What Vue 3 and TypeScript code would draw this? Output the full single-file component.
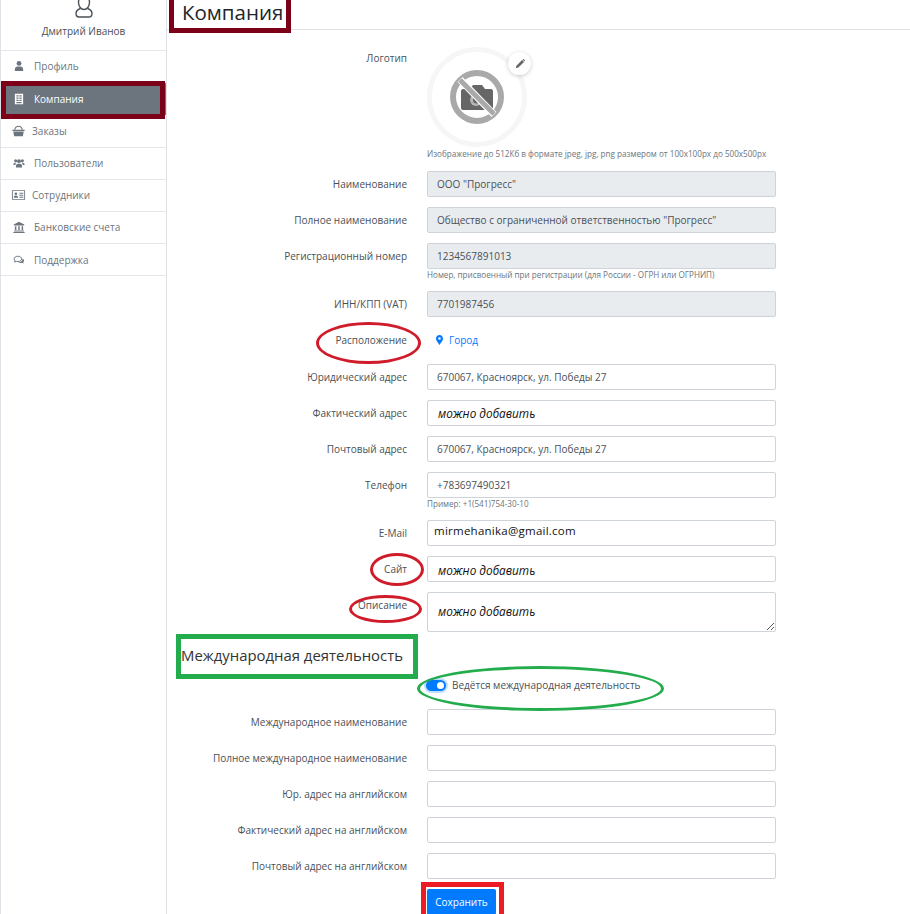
<script setup lang="ts">
interface NavItem { label: string; icon: string; active?: boolean; tight?: boolean }
interface Field { label: string; value?: string; disabled?: boolean; hint?: string; kind?: string }

const nav: NavItem[] = [
  { label: 'Профиль', icon: 'user' },
  { label: 'Компания', icon: 'building', active: true },
  { label: 'Заказы', icon: 'basket', tight: true },
  { label: 'Пользователи', icon: 'users' },
  { label: 'Сотрудники', icon: 'card', tight: true },
  { label: 'Банковские счета', icon: 'bank' },
  { label: 'Поддержка', icon: 'chat' },
]

const topFields: Field[] = [
  { label: 'Наименование', value: 'ООО "Прогресс"', disabled: true },
  { label: 'Полное наименование', value: 'Общество с ограниченной ответственностью "Прогресс"', disabled: true },
  { label: 'Регистрационный номер', value: '1234567891013', disabled: true, hint: 'Номер, присвоенный при регистрации (для России - ОГРН или ОГРНИП)' },
  { label: 'ИНН/КПП (VAT)', value: '7701987456', disabled: true },
]
const midFields: Field[] = [
  { label: 'Юридический адрес', value: '670067, Красноярск, ул. Победы 27' },
  { label: 'Фактический адрес', value: 'можно добавить', kind: 'note' },
  { label: 'Почтовый адрес', value: '670067, Красноярск, ул. Победы 27' },
  { label: 'Телефон', value: '+783697490321', hint: 'Пример: +1(541)754-30-10' },
  { label: 'E-Mail', value: 'mirmehanika@gmail.com', kind: 'mail' },
  { label: 'Сайт', value: 'можно добавить', kind: 'note low' },
]
const intlFields: string[] = [
  'Международное наименование',
  'Полное международное наименование',
  'Юр. адрес на английском',
  'Фактический адрес на английском',
  'Почтовый адрес на английском',
]
</script>

<template>
  <div class="page">
    <aside class="side">
      <div class="who">
        <svg class="avatar" viewBox="0 0 24 22" width="24" height="22" fill="none" stroke="#495057" stroke-width="1.4">
          <path d="M12 -4c-3.200 0-5.500 2.500-5.500 6.500S9 9.500 12 9.500s5.500-3 5.500-7S15.200 -4 12 -4z" />
          <path d="M8.500 8.500C5.500 9.500 4 11 4 13.500c0 2.300 1.200 3.500 3.200 3.500h9.600c2 0 3.200-1.200 3.200-3.500 0-2.500-1.500-4-4.500-5" />
        </svg>
        <div class="who-name">Дмитрий Иванов</div>
      </div>
      <a v-for="item in nav" :key="item.label" class="nav" :class="{ active: item.active, tight: item.tight }">
        <svg class="nav-ico" viewBox="0 0 16 16" fill="currentColor">
          <template v-if="item.icon === 'user'">
            <circle cx="8" cy="4.500" r="3.200" />
            <path d="M2.500 14.500v-2.300C2.500 10 4 8.500 6 8.500h4c2 0 3.500 1.500 3.500 3.700v2.300z" />
          </template>
          <template v-else-if="item.icon === 'building'">
            <path fill-rule="evenodd" d="M2.500 1h11v14h-11zM4.500 3v1.500h3V3zm4 0v1.500h3V3zM4.500 6v1.500h3V6zm4 0v1.500h3V6zM4.500 9v1.500h3V9zm4 0v1.500h3V9zM4.500 12v1.500h7V12z" />
          </template>
          <template v-else-if="item.icon === 'basket'">
            <path d="M1 6.500h14v1.500H1zM2 8.500h12l-1 5.500H3z" />
            <path d="M3 6.500C3.500 3.500 5.500 2 8 2s4.500 1.500 5 4.500h-1.300C11.200 4.300 10 3.200 8 3.200S4.800 4.300 4.300 6.500z" />
          </template>
          <template v-else-if="item.icon === 'users'">
            <circle cx="3.500" cy="5" r="2" />
            <circle cx="12.500" cy="5" r="2" />
            <circle cx="8" cy="5.500" r="2.600" />
            <path d="M4 14v-2.200C4 10 5.200 9 7 9h2c1.800 0 3 1 3 2.800V14zM0.500 10.500C.5 8.800 1.500 7.800 3 7.800h1.500C3.600 8.600 3 9.500 3 10.800H.5zM15.500 10.500c0-1.700-1-2.700-2.500-2.700h-1.500c.9.800 1.500 1.700 1.500 3h2.500z" />
          </template>
          <template v-else-if="item.icon === 'card'">
            <path fill-rule="evenodd" d="M.5 2.500h15v11H.5zM1.500 3.500v9h13v-9z" />
            <circle cx="5" cy="6.500" r="1.500" />
            <path d="M2.500 11c0-1.500 1-2.500 2.500-2.500s2.500 1 2.500 2.500zM9 5.500h4.500v1H9zM9 7.800h4.500v1H9zM9 10h4.500v1H9z" />
          </template>
          <template v-else-if="item.icon === 'bank'">
            <path d="M8 1l7 3.500V6H1V4.500zM2.500 7h2v5h-2zM7 7h2v5H7zM11.500 7h2v5h-2zM1.500 12.800h13V14h-13zM.500 14.500h15V16H.500z" />
          </template>
          <template v-else>
            <path fill="none" stroke="currentColor" stroke-width="1.300" d="M6.500 3C3.500 3 1.500 4.500 1.500 6.500c0 1 .5 1.800 1.300 2.500L2 10.800l2.500-1c.6.200 1.300.3 2 .3 3 0 5-1.600 5-3.600S9.500 3 6.500 3z" />
            <path d="M12.800 6c1.200.7 1.900 1.700 1.900 2.800 0 .9-.4 1.600-1.100 2.200l.6 1.700-2.300-.9c-.6.200-1.200.2-1.800.2-1.200 0-2.300-.3-3-.9 3 .2 6-1.600 5.700-5.100z" />
          </template>
        </svg>
        <span>{{ item.label }}</span>
      </a>
    </aside>

    <main class="main">
      <header class="head"><h1>Компания</h1></header>

      <form class="form">
        <div class="row logo-row">
          <label class="lab lab-top">Логотип</label>
          <div class="ctl">
            <div class="logo">
              <svg viewBox="0 0 54 54" width="54" height="54">
                <path fill="#666" d="M13 19h7l3-4h9l3 4h6c1 0 2 1 2 2v17c0 1-1 2-2 2H13c-1 0-2-1-2-2V21c0-1 1-2 2-2z" />
                <circle cx="26" cy="30" r="6" fill="#b5b5b5" />
                <circle cx="26.500" cy="30" r="3.500" fill="#666" />
                <circle cx="27" cy="27" r="24" fill="none" stroke="#a9a9a9" stroke-width="6" />
                <path d="M10 9.500L44 44.500" stroke="#fff" stroke-width="7" />
                <path d="M10 10L44 44" stroke="#a9a9a9" stroke-width="5" />
              </svg>
              <span class="pen">
                <svg viewBox="0 0 12 12" width="10" height="10" fill="#666">
                  <path d="M8.500 1.200L10.800 3.500 4 10.300 1 11l.7-3zM9 .7l.6-.5c.3-.2.6-.2.9 0l1.300 1.300c.2.3.2.6 0 .9l-.5.6z" />
                </svg>
              </span>
            </div>
            <div class="hint logo-hint">Изображение до 512Кб в формате jpeg, jpg, png размером от 100х100рх до 500х500рх</div>
          </div>
        </div>

        <div v-for="f in topFields" :key="f.label" class="row">
          <label class="lab lab-c">{{ f.label }}</label>
          <div class="ctl">
            <div class="inp" :class="{ off: f.disabled }">{{ f.value }}</div>
            <div v-if="f.hint" class="hint">{{ f.hint }}</div>
          </div>
        </div>

        <div class="row loc-row">
          <label class="lab lab-c">Расположение</label>
          <div class="ctl loc">
            <svg viewBox="0 0 10 14" width="7" height="10" fill="#007bff">
              <path fill-rule="evenodd" d="M5 0C2.200 0 0 2.200 0 5c0 3 3 6.500 5 9 2-2.500 5-6 5-9 0-2.800-2.200-5-5-5zm0 3.200A1.800 1.800 0 1 1 5 6.800 1.800 1.800 0 0 1 5 3.200z" />
            </svg>
            <a class="city">Город</a>
          </div>
        </div>

        <div v-for="f in midFields" :key="f.label" class="row">
          <label class="lab lab-c">{{ f.label }}</label>
          <div class="ctl">
            <div class="inp" :class="f.kind">{{ f.value }}</div>
            <div v-if="f.hint" class="hint">{{ f.hint }}</div>
          </div>
        </div>

        <div class="row area-row">
          <label class="lab lab-area">Описание</label>
          <div class="ctl">
            <div class="inp area note">
              можно добавить
              <svg class="grip" viewBox="0 0 8 8" width="8" height="8" stroke="#555" stroke-width="1">
                <path d="M1 8L8 1M5 8L8 5" />
              </svg>
            </div>
          </div>
        </div>

        <h2 class="sub">Международная деятельность</h2>

        <div class="row toggle-row">
          <span></span>
          <div class="toggle-line">
            <span class="switch"><i></i></span>
            <span>Ведётся международная деятельность</span>
          </div>
        </div>

        <div v-for="l in intlFields" :key="l" class="row">
          <label class="lab lab-c">{{ l }}</label>
          <div class="ctl"><div class="inp"></div></div>
        </div>

        <div class="row btn-row">
          <span></span>
          <div class="ctl"><button type="button" class="save">Сохранить</button></div>
        </div>
      </form>
    </main>

    <div class="mark m-title"></div>
    <div class="mark m-nav"></div>
    <div class="mark ell e-loc"></div>
    <div class="mark ell e-site"></div>
    <div class="mark ell e-desc"></div>
    <div class="mark m-intl"></div>
    <div class="mark e-toggle"></div>
    <div class="mark m-save"></div>
  </div>
</template>

<style scoped>
.page {
  position: relative;
  display: flex;
  width: 910px;
  height: 914px;
  overflow: hidden;
  background: #fff;
  font-family: "Open Sans", "Noto Sans", sans-serif;
  font-size: 10px;
  color: #495057;
}
.side {
  flex: none;
  box-sizing: border-box;
  width: 167px;
  border-left: 1px solid #dee2e6;
  border-right: 1px solid #dee2e6;
}
.who {
  height: 51px;
  box-sizing: border-box;
  text-align: center;
  border-bottom: 1px solid #e4e7ea;
}
.avatar { display: block; margin: 0 auto; }
.who-name { margin-top: 1px; line-height: 16px; }
.nav {
  display: flex;
  align-items: center;
  gap: 9px;
  height: 32px;
  box-sizing: border-box;
  padding: 0 0 1px 12px;
  border-bottom: 1px solid #e4e7ea;
  color: #6c757d;
}
.nav:last-child { padding-bottom: 0; }
.nav-ico { flex: none; width: 12px; height: 12px; }
.nav.tight { gap: 6px; padding-left: 10px; }
.nav.tight .nav-ico { width: 15px; height: 14px; }
.nav.active { height: 33px; color: #fff; background: #6c757d; }
.main { flex: 1; min-width: 0; }
.head {
  height: 30px;
  box-sizing: border-box;
  border-bottom: 1px solid #dee2e6;
  padding-left: 15px;
}
.head h1 {
  margin: 0;
  font-size: 20.500px;
  font-weight: 400;
  line-height: 24px;
  color: #212529;
}
.form { padding-top: 17px; }
.row {
  display: grid;
  grid-template-columns: 240px 349px;
  column-gap: 20px;
  margin-bottom: 10px;
}
.lab { text-align: right; }
.lab-c { height: 26px; line-height: 26px; }
.lab-top { line-height: 22px; }
.lab-area { line-height: 26px; }
.ctl { min-width: 0; }
.inp {
  height: 26px;
  box-sizing: border-box;
  border: 1px solid #ced4da;
  border-radius: 2px;
  padding: 0 9px;
  line-height: 24px;
  background: #fff;
  white-space: nowrap;
}
.inp.off { background: #e9ecef; }
.inp.note {
  font-style: italic;
  font-weight: 500;
  font-size: 11.800px;
  color: #111;
  padding-left: 10px;
}
.inp.low { line-height: 27px; }
.inp.mail {
  font-size: 11.500px;
  letter-spacing: 0.250px;
  color: #111;
  line-height: 20px;
  padding-left: 6px;
}
.area { position: relative; height: 40px; line-height: 36px; }
.grip { position: absolute; right: 1px; bottom: 1px; }
.hint {
  font-size: 8.150px;
  line-height: 12px;
  color: #6c757d;
}
.logo-row { margin-bottom: 11px; }
.logo {
  position: relative;
  width: 100px;
  height: 100px;
  box-sizing: border-box;
  border: 5px solid #f6f6f6;
  border-radius: 50%;
  display: flex;
  align-items: center;
  justify-content: center;
}
.pen {
  position: absolute;
  top: 0;
  right: -9px;
  width: 23px;
  height: 23px;
  border-radius: 50%;
  background: #fff;
  box-shadow: 0 1px 4px rgba(0, 0, 0, 0.2);
  display: flex;
  align-items: center;
  justify-content: center;
}
.logo-hint { margin-top: 1px; white-space: nowrap; }
.loc-row { margin-bottom: 11px; }
.loc { display: flex; align-items: center; gap: 6px; padding-left: 9px; height: 26px; }
.city { color: #007bff; }
.area-row { margin-bottom: 0; }
.sub {
  margin: 0;
  height: 43px;
  padding-left: 14px;
  font-size: 14.900px;
  font-weight: 400;
  line-height: 46px;
  color: #333;
}
.toggle-row { margin-bottom: 14px; }
.toggle-line { display: flex; align-items: center; gap: 6px; height: 20px; }
.switch {
  width: 20px;
  height: 11px;
  border-radius: 6px;
  background: #007bff;
  box-shadow: 0 0 0 2px rgba(0, 123, 255, 0.25);
  position: relative;
  margin-left: -1px;
}
.switch i {
  position: absolute;
  right: 2px;
  top: 2px;
  width: 7px;
  height: 7px;
  border-radius: 50%;
  background: #fff;
}
.btn-row { margin: 10px 0 0; }
.save {
  display: block;
  width: 69px;
  height: 26px;
  border: 0;
  border-radius: 2px;
  background: #007bff;
  color: #fff;
  font: inherit;
  padding: 0;
}
.mark { position: absolute; box-sizing: border-box; pointer-events: none; }
.m-title { left: 169px; top: -6px; width: 122px; height: 39px; border: 5px solid #7d0019; }
.m-nav { left: 1px; top: 81px; width: 164px; height: 38px; border: 5px solid #7d0019; }
.ell { border: 3px solid #d01c2a; border-radius: 50%; }
.e-loc { left: 316px; top: 322px; width: 105px; height: 42px; }
.e-site { left: 370px; top: 553px; width: 54px; height: 33px; }
.e-desc { left: 349px; top: 595px; width: 73px; height: 28px; }
.m-intl { left: 176px; top: 634px; width: 242px; height: 45px; border: 5px solid #22ac4c; }
.e-toggle { left: 417px; top: 666px; width: 247px; height: 45px; border: 3px solid #22ac4c; border-radius: 50%; }
.m-save { left: 421px; top: 882px; width: 83px; height: 40px; border: 5px solid #ed1c24; }
</style>
